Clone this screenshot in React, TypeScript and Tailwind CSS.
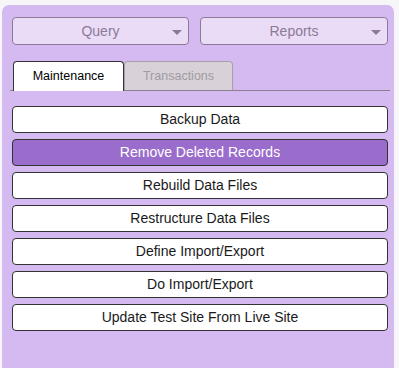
import React from 'react'

const actions = [
  'Backup Data',
  'Remove Deleted Records',
  'Rebuild Data Files',
  'Restructure Data Files',
  'Define Import/Export',
  'Do Import/Export',
  'Update Test Site From Live Site',
]

function Dropdown({ label, width }: { label: string; width: string }) {
  return (
    <div
      className={`relative flex h-[28px] items-center justify-center rounded-[4px] border border-[#8c7a98] bg-[#eadcf7] text-[14px] text-[#8a7a96] ${width}`}
    >
      {label}
      <svg className="absolute right-[6px] top-[12px]" width="10" height="5" viewBox="0 0 10 5">
        <path d="M0 0 L10 0 L5 5 Z" fill="#8a7a96" />
      </svg>
    </div>
  )
}

export default function App() {
  const active = 'Remove Deleted Records'

  return (
    <div className="h-[368px] w-[399px] bg-[#f6f5f8] pl-[2px] pt-[5px] font-['Liberation_Sans',Arial,sans-serif]">
      <div className="h-[363px] w-[392px] rounded-t-[7px] bg-[#d5b9f1] pl-[10px] pt-[12px]">
        {/* Menus */}
        <div className="flex gap-[11px]">
          <Dropdown label="Query" width="w-[177px]" />
          <Dropdown label="Reports" width="w-[188px]" />
        </div>

        {/* Tabs */}
        <div className="-ml-[2px] mt-[16px] flex w-[380px] border-b border-[#8a8090] pl-[3px]">
          <div className="-mb-px flex h-[30px] w-[111px] items-center justify-center rounded-t-[4px] border border-b-0 border-[#333] bg-white text-[12.5px] text-black">
            Maintenance
          </div>
          <div className="flex h-[29px] w-[109px] items-center justify-center rounded-t-[4px] border border-b-0 border-[#a79fa9] bg-[#d8d2d8] text-[12.5px] text-[#a09aa2]">
            Transactions
          </div>
        </div>

        {/* Actions */}
        <div className="mt-[15px] flex w-[376px] flex-col gap-[6px]">
          {actions.map((a) => (
            <div
              key={a}
              className={`flex h-[27px] items-center justify-center rounded-[4px] border border-[#333] text-[14px] ${
                a === active ? 'bg-[#9a6ccb] text-white' : 'bg-white text-[#1a1a1a]'
              }`}
            >
              {a}
            </div>
          ))}
        </div>
      </div>
    </div>
  )
}
